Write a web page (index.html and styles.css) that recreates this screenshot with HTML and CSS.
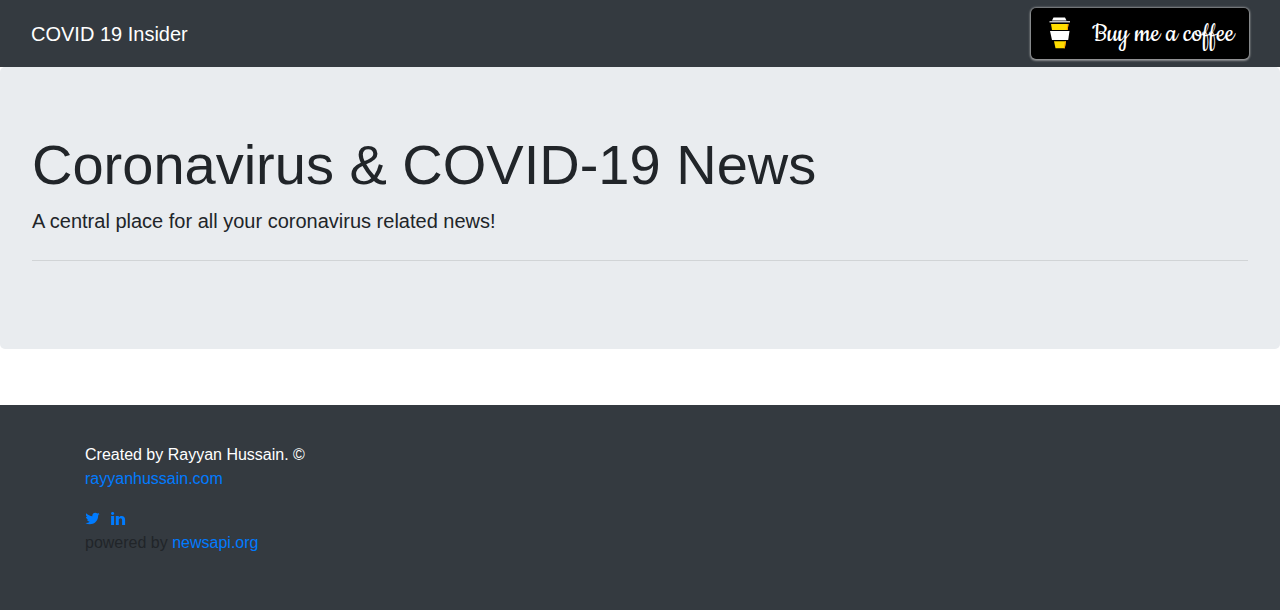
FILE: index.html
```html
<!DOCTYPE html>
<html lang="en">
<head>
<meta charset="utf-8">
<meta name="viewport" content="width=device-width, initial-scale=1">
<title>COVID 19 Insider</title>
<link rel="stylesheet" href="styles.css">
</head>
<body>
<nav class="navbar">
  <a class="brand" href="#">COVID 19 Insider</a>
  <a class="coffee-button" href="#">
    <svg class="coffee-icon" viewBox="0 0 22 34" aria-hidden="true">
      <path fill="#fff" d="M4.500 .5H16l1.500 3H3z"/>
      <path fill="#c4c4c4" d="M.5 4h20.500v1.500H.5z"/>
      <path fill="#ffdd00" d="M2 7h17.500l-.8 6H3z"/>
      <path fill="#ff9f00" d="M18.500 7h1l-.8 6h-1z"/>
      <path fill="#fff" d="M1 14h19.500l-1.300 9H3z"/>
      <path fill="#ffdd00" d="M5 24.300h12l-1.200 7H6.500z"/>
      <path fill="#ff9f00" d="M16 24.300h1l-1.200 7h-1z"/>
    </svg>
    <span>Buy me a coffee</span>
  </a>
</nav>
<header class="jumbotron">
  <h1 class="title">Coronavirus &amp; COVID-19 News</h1>
  <p class="lead">A central place for all your coronavirus related news!</p>
  <hr class="divider">
</header>
<footer class="footer">
  <div class="container">
    <p class="credit">Created by Rayyan Hussain. ©<br><a href="#">rayyanhussain.com</a></p>
    <div class="social">
      <a href="#" aria-label="Twitter"><svg class="social-icon" viewBox="0 0 1664 1408" aria-hidden="true"><path fill="currentColor" d="M1620 152q-67 98-162 167 1 14 1 42 0 130-38 259.500T1305.500 869 1121 1079.500t-258 146-323 54.500q-271 0-496-145 35 4 78 4 225 0 401-138-105-2-188-64.500T221 777q33 5 61 5 43 0 85-11-112-23-185.500-111.500T108 454v-4q68 38 146 41-66-44-105-115t-39-154q0-88 44-163 121 149 294.500 238.500T820 397q-8-38-8-74 0-134 94.500-228.500T1135-0q140 0 236 102 109-21 205-78-37 115-142 178 93-10 186-50z"/></svg></a>
      <a href="#" aria-label="LinkedIn"><svg class="social-icon" viewBox="0 0 15 14" aria-hidden="true"><path fill="currentColor" d="M0 1.600C0 .700.700.100 1.600.100s1.600.600 1.600 1.500S2.500 3 1.600 3 0 2.500 0 1.600zM.1 4.100h3v9h-3zM4.800 4.100h3v1.300c.5-.8 1.300-1.500 2.800-1.500 2.200 0 3.500 1.400 3.500 4v5.200h-3V8.300c0-1.300-.5-2-1.600-2S7.800 7 7.800 8.200v4.900h-3z"/></svg></a>
    </div>
    <p class="powered">powered by <a href="#">newsapi.org</a></p>
  </div>
</footer>
</body>
</html>
```
FILE: styles.css
```css
*,
*::before,
*::after {
  box-sizing: border-box;
}

body {
  display: flex;
  flex-direction: column;
  min-height: 100vh;
  margin: 0;
  background: #fff;
  color: #212529;
  font-family: "Liberation Sans", Arial, sans-serif;
  font-size: 16px;
  line-height: 24px;
}

a {
  color: #007bff;
  text-decoration: none;
}

.navbar {
  display: flex;
  align-items: center;
  justify-content: space-between;
  padding: 8px 31px;
  background: #343a40;
}

.brand {
  color: #fff;
  font-size: 20px;
  line-height: 30px;
}

.coffee-button {
  display: flex;
  align-items: center;
  gap: 21px;
  height: 51px;
  padding: 0 15px 0 18px;
  border-radius: 5px;
  background: #000;
  box-shadow: 0 0 2px 1px rgba(190, 190, 190, 0.5), 0 1px 2px 1px rgba(190, 190, 190, 0.5);
  color: #fff;
  font-family: Cookie, cursive;
  font-size: 30px;
  font-variant-ligatures: none;
  line-height: 36px;
  white-space: nowrap;
}

.coffee-icon {
  width: 22px;
  height: 34px;
}

.jumbotron {
  margin-bottom: 56px;
  padding: 64px 32px;
  border-radius: 5px;
  background: #e9ecef;
}

.title {
  margin: 0 0 8px;
  font-size: 56px;
  font-weight: 400;
  line-height: 67px;
}

.lead {
  margin: 0;
  font-size: 20px;
  line-height: 30px;
}

.divider {
  margin: 24px 0;
  border: 0;
  border-top: 1px solid rgba(0, 0, 0, 0.1);
}

.footer {
  flex: 1;
  padding: 38px 0;
  background: #343a40;
}

.container {
  max-width: 1140px;
  margin: 0 auto;
  padding: 0 15px;
}

.credit {
  margin: 0 0 16px;
  color: #fff;
}

.social {
  display: flex;
  align-items: center;
  gap: 11px;
  height: 24px;
}

.social a {
  display: flex;
}

.social-icon {
  width: 15px;
  height: 14px;
}

.powered {
  margin: 0;
}
```
